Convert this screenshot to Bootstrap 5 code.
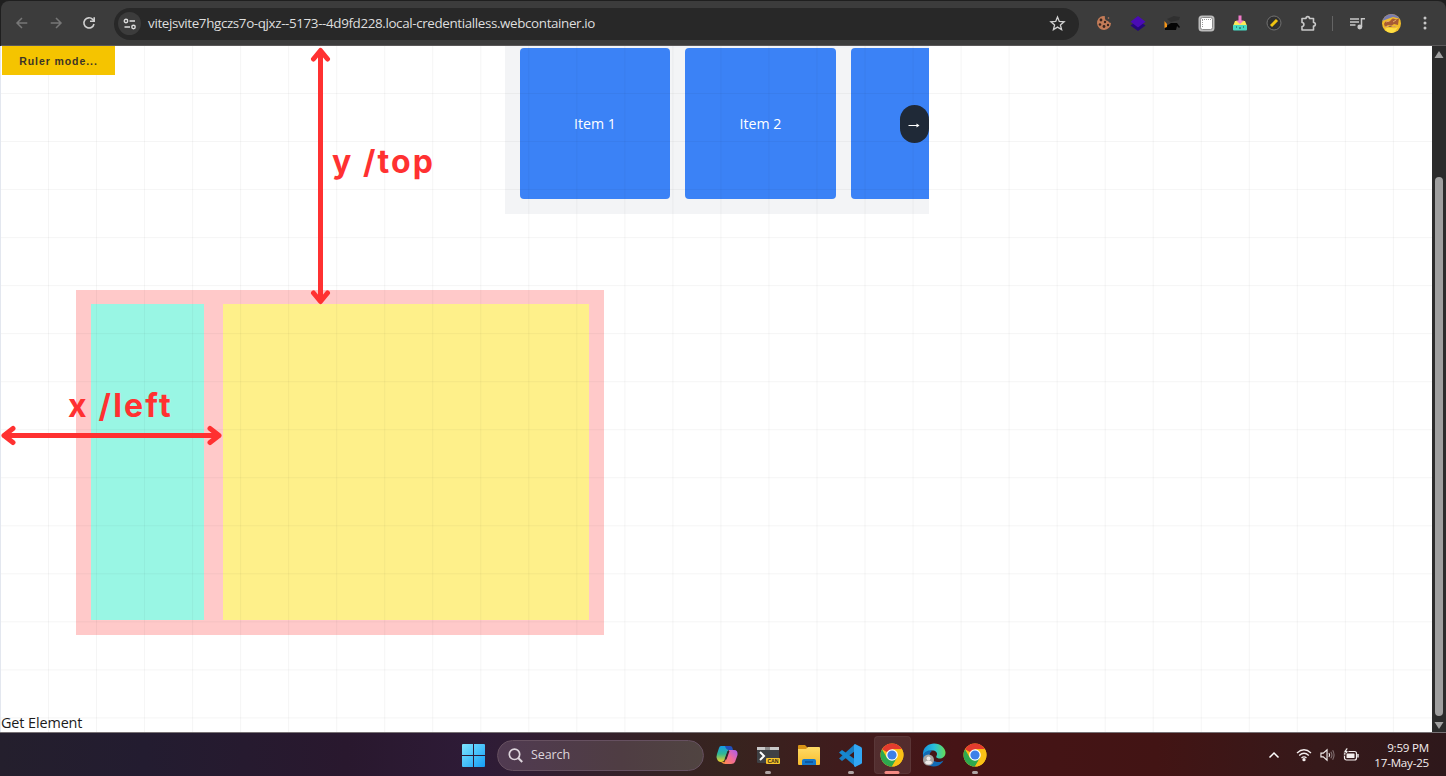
<!DOCTYPE html>
<html lang="en">
<head>
<meta charset="utf-8">
<meta name="viewport" content="width=device-width, initial-scale=1">
<title>Ruler mode</title>
<link href="https://cdn.jsdelivr.net/npm/bootstrap@5.3.0/dist/css/bootstrap.min.css" rel="stylesheet">
<style>
body{height:776px;overflow:hidden;background:#fff;font-family:"Open Sans","Noto Sans",sans-serif;color:#212529}
svg{display:block;flex:none}
/* browser toolbar */
.tab-strip{background:#1f1f1f;padding:1px 0 0 1px}
.chrome-bar{height:45px;background:#3c3c3c;border-bottom:1px solid #5a5859;border-radius:8px 8px 0 0;padding-left:4px}
.tool-cell{width:34px;height:34px;flex:none}
.nav-cell{width:33.7px}
.address{width:965px;height:32px;margin-left:8px;background:#282828;border-radius:16px;color:#dedede;font-size:13.4px;padding:0 13px 0 4px;margin-top:1px}
.site-info{width:23px;height:23px;border-radius:50%;background:#3c3c3c}
.url-text{margin-left:7px;letter-spacing:-.37px;white-space:nowrap}
.bar-line{width:1px;height:15px;background:#646464;margin:0 7px}
.avatar-pic{width:19px;height:19px;border-radius:50%}
/* page */
.viewport-row{height:686px}
.page-area{border-left:1px solid #e3e7ef}
.grid-layer{inset:0;pointer-events:none;z-index:2;background-image:linear-gradient(to right,rgba(0,0,0,.038) 1px,transparent 1px),linear-gradient(to bottom,rgba(0,0,0,.038) 1px,transparent 1px);background-size:48.04px 48.04px;background-position:47px 47px}
.top-row{height:168px}
.ruler-btn{width:113px;height:29px;margin:0 0 0 1px;background:#f5c400;color:#3b3426;font:bold 10.5px "Liberation Sans",sans-serif;letter-spacing:.92px;border-radius:0;z-index:3}
.slider-box{width:424px;margin-left:389.5px;background:#f3f4f6;padding:2px 0 0 15.2px;gap:15px}
.slide-item{width:150.5px;height:151px;flex:none;border-radius:4px;background:#3b82f6;color:#fff;font-size:14.2px;padding-top:1px}
.slide-next{right:0;top:59px;width:28.5px;height:38px;border-radius:15px;background:#1f2937;color:#fff;z-index:3}
.outer-box{width:527.5px;height:345px;margin:76px 0 0 75px;background:#ffc9c9;padding:14px 15px 15px}
.cyan-box{width:113px;background:#99f6e4}
.yellow-box{width:366px;background:#fef08a}
.get-el{font-size:14.4px;line-height:18px;letter-spacing:-.1px;color:#1b1b1b}
.measure{color:#ff3131;font:bold 32px/40px Inter,sans-serif;white-space:nowrap;z-index:4}
.measure-y{left:331px;top:96px;letter-spacing:2.1px}
.measure-x{left:67px;top:340px;letter-spacing:2.2px}
.arrow-layer{left:-1px;top:0;z-index:4}
.scroll-track{width:14px;background:#2b2b2b}
.scroll-thumb{width:8px;height:539px;border-radius:4px;background:#9f9f9f;margin-top:117px}
/* taskbar */
.task-bar{height:44px;border-top:1px solid #777174;background:linear-gradient(90deg,#241f2d 0,#231c30 10%,#29182e 24%,#2e1b37 33%,#34202c 41%,#37241f 50%,#3f1c1d 58%,#461416 66%,#421414 80%,#36191a 91%,#2e181b 100%);padding:1px 0 0 462px}
.search-pill{width:207px;height:31px;margin:0 2px 0 12px;border-radius:16px;border:1px solid #665060;background:linear-gradient(90deg,#503a51,#4f3d43 60%,#504441);color:#ddd5dc;font-size:12.5px;padding:1px 0 0 10px;letter-spacing:-.1px}
.task-cell{width:41.4px;height:42px;flex:none}
.task-cell .tile{width:37px;height:38px;border-radius:4px}
.tile-active{background:rgba(255,255,255,.09);box-shadow:inset 0 0 0 1px rgba(255,255,255,.05)}
.run-dot{bottom:2px;left:50%;transform:translateX(-50%);width:6px;height:3px;border-radius:2px;background:#b0a5a5}
.run-active{width:15px;background:#f58a84}
.clock{font-size:11.6px;line-height:15px;color:#f4eeee;text-align:right;letter-spacing:-.22px;margin:-1px 17px 0 12px;width:58px;white-space:nowrap}
</style>
</head>
<body class="d-flex flex-column">
<svg width="0" height="0" class="position-absolute">
<defs>
<linearGradient id="win" x1="0" y1="0" x2="1" y2="1"><stop stop-color="#7de5ff"/><stop offset="1" stop-color="#149df5"/></linearGradient>
<linearGradient id="edge" x1="0" y1="0" x2="1" y2="0"><stop stop-color="#178fdb"/><stop offset=".5" stop-color="#27c0dc"/><stop offset="1" stop-color="#66dd55"/></linearGradient>
<linearGradient id="cpA" x1="0" y1="0" x2="0" y2="1"><stop stop-color="#149ce8"/><stop offset=".5" stop-color="#31b893"/><stop offset="1" stop-color="#f3d126"/></linearGradient>
<linearGradient id="cpB" x1="1" y1="0" x2="0" y2="1"><stop stop-color="#a55df2"/><stop offset=".5" stop-color="#ef6a9e"/><stop offset="1" stop-color="#ff8a4c"/></linearGradient>
<linearGradient id="fold" x1="0" y1="0" x2="0" y2="1"><stop stop-color="#ffdb66"/><stop offset="1" stop-color="#f8bd2e"/></linearGradient>
<symbol id="chrome" viewBox="0 0 24 24"><circle cx="12" cy="12" r="11.5" fill="#fbc116"/><path d="M12 12 2 6.3A11.5 11.5 0 0 1 22 6.3L12 6.3Z" fill="#e33b2e"/><path d="M2 6.3A11.5 11.5 0 0 0 12 23.5L17 15 7 15Z" fill="#2da94f"/><path d="M12 6.3H22A11.5 11.5 0 0 1 12 23.5L17 15Z" fill="#fbc116"/><circle cx="12" cy="12" r="5.8" fill="#fff"/><circle cx="12" cy="12" r="4.6" fill="#3d7fe8"/></symbol>
</defs>
</svg>

<div class="tab-strip flex-shrink-0">
<header class="chrome-bar d-flex align-items-center">
  <div class="tool-cell nav-cell d-flex align-items-center justify-content-center"><svg width="14" height="14" viewBox="0 0 14 14" fill="none" stroke="#777" stroke-width="1.5"><path d="M12.3 7H2M7 2 2 7l5 5"/></svg></div>
  <div class="tool-cell nav-cell d-flex align-items-center justify-content-center"><svg width="14" height="14" viewBox="0 0 14 14" fill="none" stroke="#777" stroke-width="1.5"><path d="M1.7 7H12M7 2l5 5-5 5"/></svg></div>
  <div class="tool-cell nav-cell d-flex align-items-center justify-content-center"><svg width="14" height="14" viewBox="0 0 14 14" fill="none" stroke="#d0d0d0" stroke-width="1.6"><path d="M12 8A5.1 5.1 0 1 1 10.7 3.4L12 5"/><path d="M12.2 1.2V5.3H8"/></svg></div>
  <div class="address d-flex align-items-center flex-shrink-0">
    <span class="site-info d-flex align-items-center justify-content-center"><svg width="14" height="12" viewBox="0 0 14 12" fill="none" stroke="#ddd" stroke-width="1.4"><circle cx="3" cy="3" r="1.7"/><path d="M6.5 3H12M1.5 9H7"/><circle cx="10.5" cy="9" r="1.7"/></svg></span>
    <span class="url-text">vitejsvite7hgczs7o-qjxz--5173--4d9fd228.local-credentialless.webcontainer.io</span>
    <svg class="ms-auto" width="17" height="17" viewBox="0 0 17 17" fill="none" stroke="#d2d2d2" stroke-width="1.3"><path d="m8.5 2 1.8 4.4 4.8.4-3.7 3.1 1.2 4.7-4.1-2.5-4.1 2.5 1.2-4.7L1.9 6.8l4.8-.4Z"/></svg>
  </div>
  <div class="d-flex align-items-center ms-2">
    <div class="tool-cell d-flex align-items-center justify-content-center"><svg width="16" height="16" viewBox="0 0 16 16"><path d="M7 1a7 7 0 1 0 8 7 4 4 0 0 1-3-2 4 4 0 0 1-3-4.800Z" fill="#c27b58"/><g fill="#38251f"><circle cx="5" cy="5" r="1.4"/><circle cx="9" cy="7" r="1.2"/><circle cx="4" cy="9.500" r="1.300"/><circle cx="8" cy="11.500" r="1.400"/><circle cx="12" cy="10" r="1.200"/></g><circle cx="12.500" cy="3" r=".8" fill="#c27b58"/></svg></div>
    <div class="tool-cell d-flex align-items-center justify-content-center"><svg width="16" height="15" viewBox="0 0 16 15"><path d="M.5 9.500 8 4l7.500 5.500L8 15Z" fill="#25077a"/><path d="M.5 5.800 8 0l7.500 5.800L8 11.500Z" fill="#4a0bb5"/></svg></div>
    <div class="tool-cell d-flex align-items-center justify-content-center"><svg width="17" height="16" viewBox="0 0 17 16"><path d="M3 4 10 1l6 1-1 3-8 2Z" fill="#303030"/><path d="M4 10l3-2h6l3 4-1 1-2-2-1 4H1v-3Z" fill="#050505"/><path d="m.5 6 2.500 3v3L.5 13Z" fill="#f59518"/></svg></div>
    <div class="tool-cell d-flex align-items-center justify-content-center"><svg width="17" height="17" viewBox="0 0 17 17"><rect x=".5" y=".5" width="16" height="16" rx="3.500" fill="#bcbcbc"/><rect x="2.500" y="2.500" width="12" height="12" rx="2" fill="#fff" stroke="#8c8c8c"/><path d="M4 4.500h9M4.500 5v8" stroke="#999" stroke-dasharray="1 1"/></svg></div>
    <div class="tool-cell d-flex align-items-center justify-content-center"><svg width="14" height="16" viewBox="0 0 14 16"><path d="M2 6h10l2 5H0Z" fill="#f9e85a"/><rect y="10" width="14" height="5.500" rx="1" fill="#45d9c3"/><path d="M5.500.5h3v5H11L7 9 3 5.500h2.500Z" fill="#f27bc9"/><path d="M3 12h1m6 0h1M6 13h2" stroke="#164a48"/></svg></div>
    <div class="tool-cell d-flex align-items-center justify-content-center"><svg width="16" height="16" viewBox="0 0 16 16"><circle cx="8" cy="8" r="7" fill="#303030" stroke="#707070"/><path d="m5 11 6-6" stroke="#f0c410" stroke-width="3"/></svg></div>
    <div class="tool-cell d-flex align-items-center justify-content-center"><svg width="17" height="17" viewBox="0 0 17 17" fill="none" stroke="#c8c8c8" stroke-width="1.600"><path d="M2 3.500h4C6 1 9.500 1 9.500 3.500h4v4c2.500 0 2.500 3.500 0 3.500v4H2v-3.500c2.500 0 2.500-4 0-4Z" stroke-linejoin="round"/></svg></div>
    <div class="bar-line"></div>
    <div class="tool-cell d-flex align-items-center justify-content-center"><svg width="15" height="13" viewBox="0 0 15 13" fill="none" stroke="#c8c8c8" stroke-width="1.500"><path d="M0 2h9M0 5h9M0 8h5.500M11.500 10V1.700H15"/><circle cx="9.800" cy="10" r="1.700" fill="#c8c8c8"/></svg></div>
    <div class="tool-cell d-flex align-items-center justify-content-center"><svg class="avatar-pic" viewBox="0 0 19 19"><path fill="#f1bc29" d="M0 0h19v19H0z"/><path fill="#7b7dae" d="M0 0h19v5L11 3 0 7z"/><path d="M2 10c2-5 4 0 7-4s5 2 8-2l-1 7-4-1-3 2-3-1-3 2Z" fill="#a85b34"/><path d="m4 8 3-1m4 1 3-2M3 13l5-1 6 1" stroke="#e5a968"/><path d="M3 15c5-3 8 1 13-2l-4 6H6Z" fill="#ffdf43"/></svg></div>
    <div class="tool-cell d-flex align-items-center justify-content-center"><svg width="4" height="14" viewBox="0 0 4 14" fill="#c8c8c8"><circle cx="2" cy="2" r="1.500"/><circle cx="2" cy="7" r="1.500"/><circle cx="2" cy="12" r="1.500"/></svg></div>
  </div>
</header>
</div>

<main class="viewport-row d-flex flex-shrink-0">
  <div class="page-area flex-grow-1 position-relative d-flex flex-column overflow-hidden">
    <div class="top-row d-flex align-items-start">
      <button class="ruler-btn border-0 p-0 flex-shrink-0 position-relative">Ruler mode...</button>
      <div class="slider-box d-flex align-items-start h-100 position-relative overflow-hidden flex-shrink-0">
        <div class="slide-item d-flex align-items-center justify-content-center">Item 1</div>
        <div class="slide-item d-flex align-items-center justify-content-center">Item 2</div>
        <div class="slide-item"></div>
        <span class="slide-next position-absolute d-flex align-items-center justify-content-center"><svg class="mt-1" width="12" height="8" viewBox="0 0 12 8"><path d="M.5 3.500H10" stroke="#fff"/><path d="m8.500 1.500 3 2-3 2Z" fill="#fff"/></svg></span>
      </div>
    </div>
    <div class="outer-box d-flex justify-content-between flex-shrink-0">
      <div class="cyan-box"></div>
      <div class="yellow-box"></div>
    </div>
    <div class="get-el mt-auto">Get Element</div>
    <div class="grid-layer position-absolute"></div>
    <svg class="arrow-layer position-absolute" width="340" height="410" viewBox="0 46 340 410" fill="none" stroke="#ff3131" stroke-width="5" stroke-linecap="round" stroke-linejoin="round"><path d="M320.500 51V301M313.500 59l7-8.500 7 8.500M313.500 293l7 8.500 7-8.500M4 435.500H219M13 428.500l-9 7 9 7M210 428.500l9 7-9 7"/></svg>
    <div class="measure measure-y position-absolute">y /top</div>
    <div class="measure measure-x position-absolute">x /left</div>
  </div>
  <div class="scroll-track d-flex flex-column align-items-center flex-shrink-0">
    <svg class="mt-1" width="10" height="10" viewBox="0 0 10 10"><path d="M5 1 9.500 8h-9Z" fill="#a0a0a0"/></svg>
    <div class="scroll-thumb"></div>
    <svg class="mt-1" width="10" height="10" viewBox="0 0 10 10"><path d="M5 9 9.500 2h-9Z" fill="#a0a0a0"/></svg>
  </div>
</main>

<footer class="task-bar d-flex align-items-center flex-shrink-0">
  <svg width="23" height="23" viewBox="0 0 23 23" fill="url(#win)"><path d="M1 0h10v11H0V1q0-1 1-1ZM12 0h10q1 0 1 1v10H12ZM0 12h11v11H1q-1 0-1-1ZM12 12h11v10q0 1-1 1H12Z"/></svg>
  <div class="search-pill d-flex align-items-center flex-shrink-0"><svg class="me-2" width="15" height="15" viewBox="0 0 15 15" fill="none" stroke="#ddd5dc" stroke-width="1.700"><circle cx="6.500" cy="6.300" r="5.200"/><path d="m10.200 10 4 4" stroke-width="2"/></svg>Search</div>
  <div class="task-cell d-flex align-items-center justify-content-center"><svg width="22" height="20" viewBox="0 0 22 20"><path d="M5 1h9L9 14q-1 3-4 3-3 0-4-3-1-2 0-5L3 3q.5-2 2-2Z" fill="url(#cpA)"/><path d="M9 1h5q2 0 2.500 2l.5 2h-4Q10 5 9 1Z" fill="#2250bd"/><path d="M13 5h5q4 0 3.500 5l-2.500 7q-1 2-4 2H8L13 5Z" fill="url(#cpB)"/><path d="M5 17h3q2 0 2.500-2l-2 3q-1 1.500-2 0Z" fill="#f3923c"/><path d="m11.500 6-3 8.500h2L13.500 6Z" fill="#32232a"/></svg></div>
  <div class="task-cell position-relative d-flex align-items-center justify-content-center"><svg width="24" height="20" viewBox="0 0 24 20"><rect x="1" y="2" width="22" height="16" rx="1" fill="#3f4145"/><path d="M1 2h22v3H1Z" fill="#c9c9c9"/><path d="M9 2h5v3H9Z" fill="#8b8b8b"/><path d="m4 7 4 4-4 4" stroke="#fff" stroke-width="2" fill="none"/><rect x="10" y="13" width="14" height="6" rx="1" fill="#f8c52a"/><text x="17" y="18" text-anchor="middle" font-family="Liberation Sans" font-size="5.200" font-weight="bold" fill="#322714">CAN</text></svg><i class="run-dot position-absolute"></i></div>
  <div class="task-cell d-flex align-items-center justify-content-center"><svg width="24" height="22" viewBox="0 0 24 22"><path d="M1 2q0-1 1-1h6l3 3h11v6H1Z" fill="#d99416"/><path d="M1 5h8l2-2h11q1 0 1 1v16q0 1-1 1H2q-1 0-1-1Z" fill="url(#fold)"/><path d="M5 21v-4q0-2 2-2h10q2 0 2 2v4Z" fill="#1479cc"/><path d="M8 18h8" stroke="#0c4f94" stroke-width="1.500"/></svg></div>
  <div class="task-cell position-relative d-flex align-items-center justify-content-center"><svg width="23" height="23" viewBox="0 0 23 23"><path d="M16 0v7L3 17 0 14.500Z" fill="#187fc4"/><path d="M0 8.500 3 6l14 10v7Z" fill="#1688d0"/><path d="m16 0 6 3q1 .5 1 1.500v14q0 1-1 1.500l-6 3-1-1V1Z" fill="#32a7f4"/></svg><i class="run-dot position-absolute"></i></div>
  <div class="task-cell position-relative d-flex align-items-center justify-content-center"><span class="tile tile-active d-flex align-items-center justify-content-center"><svg width="24" height="24"><use href="#chrome"/></svg></span><i class="run-dot run-active position-absolute"></i></div>
  <div class="task-cell d-flex align-items-center justify-content-center"><svg width="24" height="24" viewBox="0 0 24 24"><path d="M1 13C0 4 7 .5 12 .5c7 0 11.500 5 11.500 9 0 4-3 6-6 6-2 0-4-1-3-2.500 2-4-2-6-5-5.500C5 8 2 10 1 13Z" fill="url(#edge)"/><path d="M1 13c1-4 5-6.500 9-5-4 2-3 10 5 11 3 .5 5-.7 6.500-1.500-3 6-10 7-14 5C3 20.500 1 17 1 13Z" fill="#126bb5"/><circle cx="6.500" cy="17" r="5.500" fill="#a6a4a2"/><circle cx="6.500" cy="15.500" r="2" fill="#eeeae7"/><path d="M3 20q0-2.500 3.500-2.500T10 20q-3 3-7 0Z" fill="#eeeae7"/></svg></div>
  <div class="task-cell position-relative d-flex align-items-center justify-content-center"><svg width="24" height="24"><use href="#chrome"/></svg><i class="run-dot position-absolute"></i></div>
  <div class="d-flex align-items-center ms-auto">
    <svg width="12" height="8" viewBox="0 0 12 8" fill="none" stroke="#fff" stroke-width="1.500"><path d="m1.500 6.500 4.500-4.500 4.500 4.500"/></svg>
    <svg class="ms-3" width="16" height="14" viewBox="0 0 16 14" fill="none" stroke="#f4eeee" stroke-width="1.300"><path d="M1 5q7-6.500 14 0M3.200 7.500q4.800-4.500 9.600 0M5.500 10q2.500-2.300 5 0"/><circle cx="8" cy="11.700" r="1" fill="#fff"/></svg>
    <svg class="ms-2" width="15" height="14" viewBox="0 0 16 14" fill="none" stroke="#f4eeee" stroke-width="1.200"><path d="M1 5h2.500L7.500 1.500v11L3.500 9H1Z"/><path d="M9.500 5q1.500 2 0 4"/><path d="M11.500 3.500q2.500 3.500 0 7M13.500 2q3 5 0 10" stroke="#806f70"/></svg>
    <svg class="ms-2" width="16" height="14" viewBox="0 0 16 14"><rect x="1.500" y="3.500" width="12" height="8.500" rx="2" fill="none" stroke="#f4eeee" stroke-width="1.200"/><rect x="3.500" y="5.500" width="8" height="4.500" rx=".5" fill="#f4eeee"/><path d="M15 6v3.500" stroke="#fff" stroke-width="1.300"/><path d="M3.300 0 .5 4.500h2L1.500 8 5.500 3H3.700L5 0Z" fill="#fff" stroke="#36191a" stroke-width=".6"/></svg>
    <div class="clock">9:59 PM<br>17-May-25</div>
  </div>
</footer>
<script src="https://cdn.jsdelivr.net/npm/bootstrap@5.3.0/dist/js/bootstrap.bundle.min.js"></script>
</body>
</html>
